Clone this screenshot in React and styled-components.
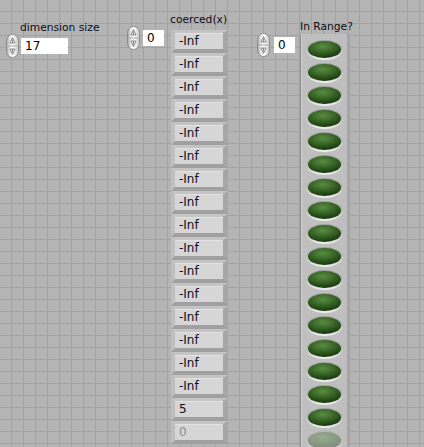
import React, { useId } from "react";
import styled, { createGlobalStyle } from "styled-components";

const Global = createGlobalStyle`
  html, body { margin: 0; padding: 0; background: #b4b4b4; }
  body { font-family: "DejaVu Sans", "Liberation Sans", sans-serif; }
`;

const Panel = styled.div`
  width: 424px;
  height: 447px;
  overflow: hidden;
  display: flex;
  align-items: flex-start;
  padding-left: 6px;
  box-sizing: border-box;
  background-color: #b4b4b4;
  background-image:
    linear-gradient(to right, #a2a2a2 1px, transparent 1px),
    linear-gradient(to bottom, #a2a2a2 1px, transparent 1px);
  background-size: 12px 12px;
  background-position: 11px 11px;
`;

const Column = styled.div`
  flex: 0 0 ${(p) => p.$w}px;
  margin-top: ${(p) => p.$top}px;
  display: flex;
  flex-direction: column;
  align-items: flex-start;
`;

const Label = styled.div`
  font-size: 10.7px;
  line-height: 13px;
  color: #0c0c14;
  white-space: nowrap;
  margin-left: ${(p) => p.$indent || 0}px;
`;

const ControlRow = styled.div`
  display: flex;
  align-items: center;
  gap: ${(p) => p.$gap}px;
`;

const Input = styled.div`
  width: ${(p) => p.$w}px;
  height: 16px;
  background: #ffffff;
  box-sizing: border-box;
  padding-left: 4px;
  font-size: 12px;
  line-height: 16px;
  color: #000;
`;

const ArrayFrame = styled.div`
  margin-top: ${(p) => p.$gap}px;
  margin-left: ${(p) => p.$indent}px;
  display: flex;
  flex-direction: column;
`;

const Cell = styled.div`
  height: 23px;
  box-sizing: border-box;
  border-style: solid;
  border-width: 3px 5px 4px 4px;
  border-color: #c4c4c4 #a6a6a6 #a0a0a0 #bfbfbf;
`;

const NumBox = styled.div`
  width: 48px;
  height: 16px;
  background: #d6d6d6;
  box-shadow: inset 0 1px 0 #e2e2e2;
  box-sizing: border-box;
  padding-left: 4px;
  font-size: 12px;
  line-height: 16px;
  color: ${(p) => (p.$dim ? "#8c8c8c" : "#0d0d20")};
`;

const LedFrame = styled.div`
  margin-top: 1px;
  width: 46px;
  height: 500px;
  box-sizing: content-box;
  padding-top: 4px;
  background: #bfbfbf;
  border-left: 1px solid #8e8e8e;
  border-right: 3px solid #a5a5a5;
  box-shadow: inset 1px 0 0 #d0d0d0;
  display: flex;
  flex-direction: column;
`;

const LedCell = styled.div`
  height: 23px;
  display: flex;
  align-items: center;
  justify-content: center;
  opacity: ${(p) => (p.$dim ? 0.38 : 1)};
`;

const LedRim = styled.div`
  width: 37px;
  height: 20px;
  border-radius: 50%;
  background: linear-gradient(to bottom, #9c9c9c 0%, #b4b4b4 40%, #d4d4d4 75%, #f2f2f2 100%);
  display: flex;
  align-items: flex-start;
  justify-content: center;
  padding-top: 1px;
  box-sizing: border-box;
`;

const LedLens = styled.div`
  width: 33px;
  height: 17px;
  border-radius: 50%;
  background: radial-gradient(ellipse 70% 65% at 45% 32%, #5c8b45 0%, #3c6a29 45%, #264c17 80%, #1a390e 100%);
`;

function Spinner() {
  const id = useId().replace(/:/g, "");
  return (
    <svg width="13" height="24" viewBox="0 0 13 24">
      <defs>
        <linearGradient id={id} x1="0" x2="1" y1="0" y2="0">
          <stop offset="0" stopColor="#a4a4a4" />
          <stop offset="0.3" stopColor="#ececec" />
          <stop offset="0.55" stopColor="#ffffff" />
          <stop offset="1" stopColor="#c4c4c4" />
        </linearGradient>
      </defs>
      <rect x="0.5" y="0.5" width="12" height="23" rx="6" ry="6" fill={`url(#${id})`} stroke="#8c8c8c" />
      <line x1="1.5" y1="12" x2="11.5" y2="12" stroke="#a8a8a8" />
      <path d="M6.5 3.5 L9 9 L4 9 Z" fill="none" stroke="#6e6e6e" strokeWidth="0.8" />
      <line x1="6.5" y1="5.5" x2="6.5" y2="9" stroke="#6e6e6e" strokeWidth="0.8" />
      <path d="M6.5 20.5 L9 15 L4 15 Z" fill="none" stroke="#6e6e6e" strokeWidth="0.8" />
      <line x1="6.5" y1="15" x2="6.5" y2="18.5" stroke="#6e6e6e" strokeWidth="0.8" />
    </svg>
  );
}

const numbers = [...Array(16).fill("-Inf"), "5"];

export default function App() {
  return (
    <>
      <Global />
      <Panel>
        <Column $w={121} $top={21}>
          <Label $indent={14}>dimension size</Label>
          <ControlRow $gap={2}>
            <Spinner />
            <Input $w={47}>17</Input>
          </ControlRow>
        </Column>

        <Column $w={43} $top={26}>
          <ControlRow $gap={3}>
            <Spinner />
            <Input $w={21}>0</Input>
          </ControlRow>
        </Column>

        <Column $w={87} $top={13}>
          <Label>coerced(x)</Label>
          <ArrayFrame $gap={4} $indent={1}>
            {numbers.map((v, i) => (
              <Cell key={i}>
                <NumBox>{v}</NumBox>
              </Cell>
            ))}
            <Cell>
              <NumBox $dim>0</NumBox>
            </Cell>
          </ArrayFrame>
        </Column>

        <Column $w={43} $top={33}>
          <ControlRow $gap={4}>
            <Spinner />
            <Input $w={21}>0</Input>
          </ControlRow>
        </Column>

        <Column $w={60} $top={20}>
          <Label>In Range?</Label>
          <LedFrame>
            {Array.from({ length: 18 }).map((_, i) => (
              <LedCell key={i} $dim={i === 17}>
                <LedRim>
                  <LedLens />
                </LedRim>
              </LedCell>
            ))}
          </LedFrame>
        </Column>
      </Panel>
    </>
  );
}
